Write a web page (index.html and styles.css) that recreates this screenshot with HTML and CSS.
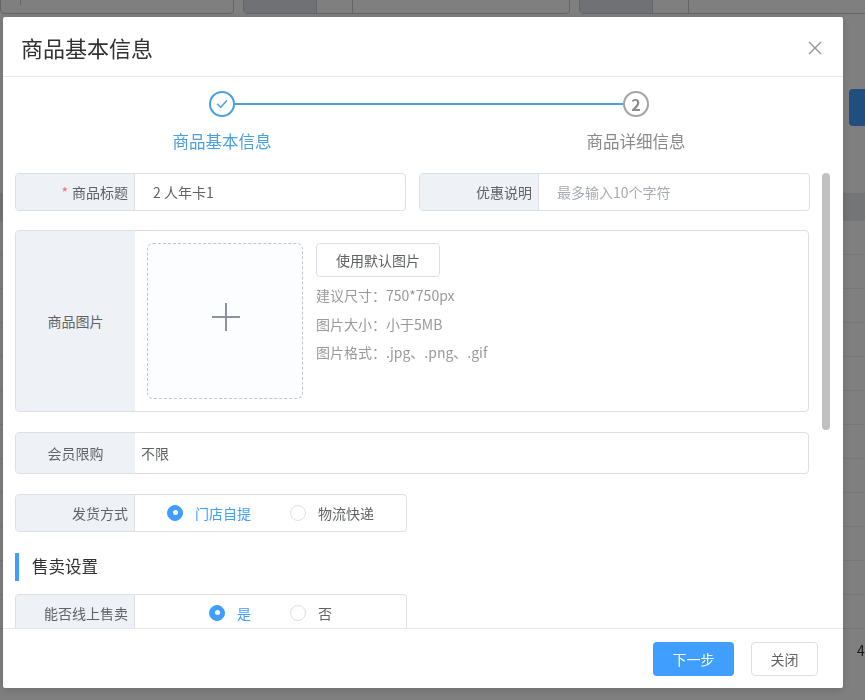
FILE: index.html
```html
<!DOCTYPE html>
<html lang="zh-CN">
<head>
<meta charset="utf-8">
<title>商品基本信息</title>
<link rel="stylesheet" href="styles.css">
</head>
<body>
<div class="page">
  <div class="topbar">
    <div class="tb-box tb-select"><span class="tb-seg tb-seg-a"></span></div>
    <div class="tb-box tb-group">
      <span class="tb-pre"></span><span class="tb-mid"></span><span class="tb-in"></span>
    </div>
    <div class="tb-box tb-group">
      <span class="tb-pre"></span><span class="tb-mid"></span><span class="tb-in"></span>
    </div>
  </div>
  <div class="page-actions"><span class="page-btn"></span></div>
  <div class="page-table">
    <div class="pt-row pt-head"></div>
    <div class="pt-row"></div><div class="pt-row"></div><div class="pt-row"></div>
    <div class="pt-row"></div><div class="pt-row"></div><div class="pt-row"></div>
    <div class="pt-row"></div><div class="pt-row"></div><div class="pt-row"></div>
    <div class="pt-row"></div><div class="pt-row"></div><div class="pt-row"></div>
  </div>
  <div class="page-pager">4</div>
</div>

<div class="mask"></div>

<div class="dialog">
  <div class="dlg-header">
    <span class="dlg-title">商品基本信息</span>
    <svg class="dlg-close" width="14" height="14" viewBox="0 0 14 14"><path d="M1 1L13 13M13 1L1 13" stroke="#909399" stroke-width="1.4" fill="none"/></svg>
  </div>

  <div class="dlg-body">
    <div class="steps">
      <div class="step-icons">
        <span class="step-circle done">
          <svg width="14" height="14" viewBox="0 0 14 14"><path d="M2.5 7.2L5.8 10.2L11.6 3.8" stroke="#4a9fe0" stroke-width="1.5" fill="none" stroke-linecap="round" stroke-linejoin="round"/></svg>
        </span>
        <span class="step-line"></span>
        <span class="step-circle todo">2</span>
      </div>
      <div class="step-labels">
        <span class="step-label active">商品基本信息</span>
        <span class="step-label">商品详细信息</span>
      </div>
    </div>

    <div class="form">
      <div class="row-two">
        <div class="field">
          <div class="f-label"><span class="req">*</span> 商品标题</div>
          <div class="f-value f-input">2 人年卡1</div>
        </div>
        <div class="field">
          <div class="f-label">优惠说明</div>
          <div class="f-value f-input placeholder">最多输入10个字符</div>
        </div>
      </div>

      <div class="field field-img">
        <div class="f-label center">商品图片</div>
        <div class="f-value img-cell">
          <div class="uploader">
            <svg width="30" height="30" viewBox="0 0 30 30"><path d="M15 1V29M1 15H29" stroke="#8c939d" stroke-width="2" fill="none"/></svg>
          </div>
          <div class="img-info">
            <span class="btn-default">使用默认图片</span>
            <p class="tip">建议尺寸：750*750px</p>
            <p class="tip">图片大小：小于5MB</p>
            <p class="tip">图片格式：.jpg、.png、.gif</p>
          </div>
        </div>
      </div>

      <div class="field field-wide">
        <div class="f-label center">会员限购</div>
        <div class="f-value f-plain">不限</div>
      </div>

      <div class="field field-half">
        <div class="f-label">发货方式</div>
        <div class="f-value radios">
          <span class="radio checked"><i></i>门店自提</span>
          <span class="radio"><i></i>物流快递</span>
        </div>
      </div>

      <div class="section-title">售卖设置</div>

      <div class="field field-half">
        <div class="f-label">能否线上售卖</div>
        <div class="f-value radios">
          <span class="radio checked"><i></i>是</span>
          <span class="radio"><i></i>否</span>
        </div>
      </div>
    </div>

    <span class="scroll-thumb"></span>
  </div>

  <div class="dlg-footer">
    <span class="btn btn-primary">下一步</span>
    <span class="btn btn-plain">关闭</span>
  </div>
</div>
</body>
</html>
```

FILE: styles.css
```css
* { box-sizing: border-box; }
html, body {
  margin: 0;
  padding: 0;
  width: 865px;
  height: 700px;
  overflow: hidden;
  background: #fff;
  font-family: "Noto Sans CJK SC", "Microsoft YaHei", sans-serif;
}

/* ---------- background page ---------- */
.page { width: 865px; height: 700px; overflow: hidden; }
.topbar {
  height: 17px;
  display: flex;
  align-items: flex-end;
  gap: 9px;
  overflow: hidden;
}
.tb-box {
  height: 32px;
  flex: none;
  border: 1px solid #c8cbd2;
  border-radius: 4px;
  margin-bottom: 3px;
  display: flex;
}
.tb-select { width: 234px; }
.tb-seg-a { width: 20px; border-right: 1px solid #c8cbd2; height: 22px; }
.tb-group { width: 327px; }
.tb-pre { width: 73px; background: #dfe2e8; border-right: 1px solid #c8cbd2; }
.tb-mid { width: 36px; border-right: 1px solid #c8cbd2; }
.tb-in { flex: 1; }

.page-actions { padding: 72px 0 0 849px; height: 109px; }
.page-btn {
  display: block;
  width: 90px;
  height: 37px;
  background: #409eff;
  border-radius: 4px;
}
.page-table { margin-top: 67px; }
.pt-row { height: 34px; border-bottom: 1px solid #ebeef5; }
.pt-head { height: 28px; background: #e8eaee; }
.page-pager {
  position: fixed;
  left: 857px;
  top: 640px;
  font-size: 14px;
  color: #303133;
}

/* ---------- mask & dialog ---------- */
.mask {
  position: fixed;
  inset: 0;
  background: rgba(0, 0, 0, 0.5);
}
.dialog {
  position: fixed;
  left: 3px;
  top: 17px;
  width: 840px;
  height: 671px;
  background: #fff;
  border-radius: 2px;
  display: flex;
  flex-direction: column;
  box-shadow: 0 2px 10px rgba(0,0,0,0.15);
}
.dlg-header {
  height: 60px;
  flex: none;
  border-bottom: 1px solid #e8e8e8;
  display: flex;
  align-items: center;
  justify-content: space-between;
  padding: 0 21px 0 18px;
}
.dlg-title {
  font-size: 22px;
  line-height: 30px;
  color: #303133;
  margin-top: 1px;
}
.dlg-close { display: block; margin-top: 3px; }

.dlg-body {
  position: relative;
  height: 551px;
  flex: none;
  overflow: hidden;
}

/* steps */
.steps { padding-top: 14px; }
.step-icons {
  display: flex;
  align-items: center;
  padding: 0 194px 0 206px;
}
.step-circle {
  width: 26px;
  height: 26px;
  border-radius: 50%;
  flex: none;
  display: flex;
  align-items: center;
  justify-content: center;
}
.step-circle.done { border: 2px solid #4a9fe0; }
.step-circle.todo {
  border: 2px solid #a3a3a3;
  color: #8a8a8a;
  font-weight: bold;
  font-size: 16px;
  line-height: 1;
}
.step-line {
  flex: 1;
  height: 2px;
  background: #4a9fe0;
}
.step-labels {
  display: flex;
  gap: 214px;
  padding-left: 119px;
  margin-top: 13px;
}
.step-label {
  width: 200px;
  text-align: center;
  font-size: 16.5px;
  line-height: 22px;
  color: #8a8a8a;
}
.step-label.active { color: #4a9fe0; }

/* form */
.form {
  padding: 21px 34px 0 12px;
  font-size: 14px;
  color: #606266;
}
.row-two {
  display: grid;
  grid-template-columns: 391px 391px;
  gap: 13px;
}
.field {
  display: flex;
  border: 1px solid #dcdfe6;
  border-radius: 4px;
  overflow: hidden;
  height: 38px;
}
.f-label {
  width: 119px;
  flex: none;
  background: #eef1f6;
  border-right: 1px solid #dcdfe6;
  display: flex;
  align-items: center;
  justify-content: flex-end;
  padding-right: 6px;
  color: #606266;
  white-space: nowrap;
}
.f-label.center { justify-content: center; padding-right: 0; }
.req { color: #f56c6c; margin-right: 4px; }
.f-value {
  flex: 1;
  display: flex;
  align-items: center;
}
.f-input { padding-left: 18px; }
.placeholder { color: #a8abb2; }

.field-img {
  height: 182px;
  margin-top: 19px;
}
.field-img .f-label { border-right: none; }
.img-cell {
  align-items: flex-start;
  padding: 12px 0 0 12px;
  gap: 13px;
}
.uploader {
  width: 156px;
  height: 156px;
  border: 1px dashed #c0c4cc;
  border-radius: 6px;
  background: #fbfdff;
  display: flex;
  align-items: center;
  justify-content: center;
  flex: none;
}
.uploader svg { margin: 0 0 8px 2px; }
.img-info { display: flex; flex-direction: column; align-items: flex-start; }
.btn-default {
  display: inline-flex;
  align-items: center;
  justify-content: center;
  width: 124px;
  height: 34px;
  border: 1px solid #dcdfe6;
  border-radius: 4px;
  font-size: 14px;
  color: #606266;
  margin-bottom: 4px;
}
.tip {
  margin: 0;
  font-size: 14px;
  line-height: 28.5px;
  color: #999;
}

.field-wide {
  height: 42px;
  margin-top: 20px;
}
.field-wide .f-label { border-right: none; }
.f-plain { padding-left: 6px; }

.field-half {
  width: 392px;
  margin-top: 20px;
}
.radios { justify-content: center; padding-bottom: 1px; }
.radio {
  display: inline-flex;
  align-items: center;
  color: #606266;
  margin-right: 39px;
}
.radio:last-child { margin-right: 0; }
.radio i {
  width: 16px;
  height: 16px;
  border-radius: 50%;
  border: 1px solid #dcdfe6;
  margin-right: 12px;
  position: relative;
  display: inline-block;
}
.radio.checked { color: #409eff; }
.radio.checked i {
  background: #409eff;
  border-color: #409eff;
}
.radio.checked i::after {
  content: "";
  position: absolute;
  left: 4.5px;
  top: 4.5px;
  width: 5px;
  height: 5px;
  border-radius: 50%;
  background: #fff;
}

.section-title {
  margin-top: 21px;
  height: 28px;
  border-left: 4px solid #409eff;
  padding-left: 13px;
  font-size: 16.5px;
  line-height: 27px;
  color: #303133;
}
.section-title + .field-half { margin-top: 13px; }

.scroll-thumb {
  position: absolute;
  right: 13px;
  top: 96px;
  width: 8px;
  height: 257px;
  border-radius: 4px;
  background: #c1c1c1;
}

/* footer */
.dlg-footer {
  flex: none;
  height: 60px;
  border-top: 1px solid #e8e8e8;
  display: flex;
  justify-content: flex-end;
  align-items: center;
  gap: 17px;
  padding-right: 25px;
}
.btn {
  display: inline-flex;
  align-items: center;
  justify-content: center;
  height: 34px;
  border-radius: 4px;
  font-size: 14px;
}
.btn-primary {
  width: 81px;
  background: #409eff;
  color: #fff;
}
.btn-plain {
  width: 67px;
  border: 1px solid #dcdfe6;
  color: #606266;
}
```
